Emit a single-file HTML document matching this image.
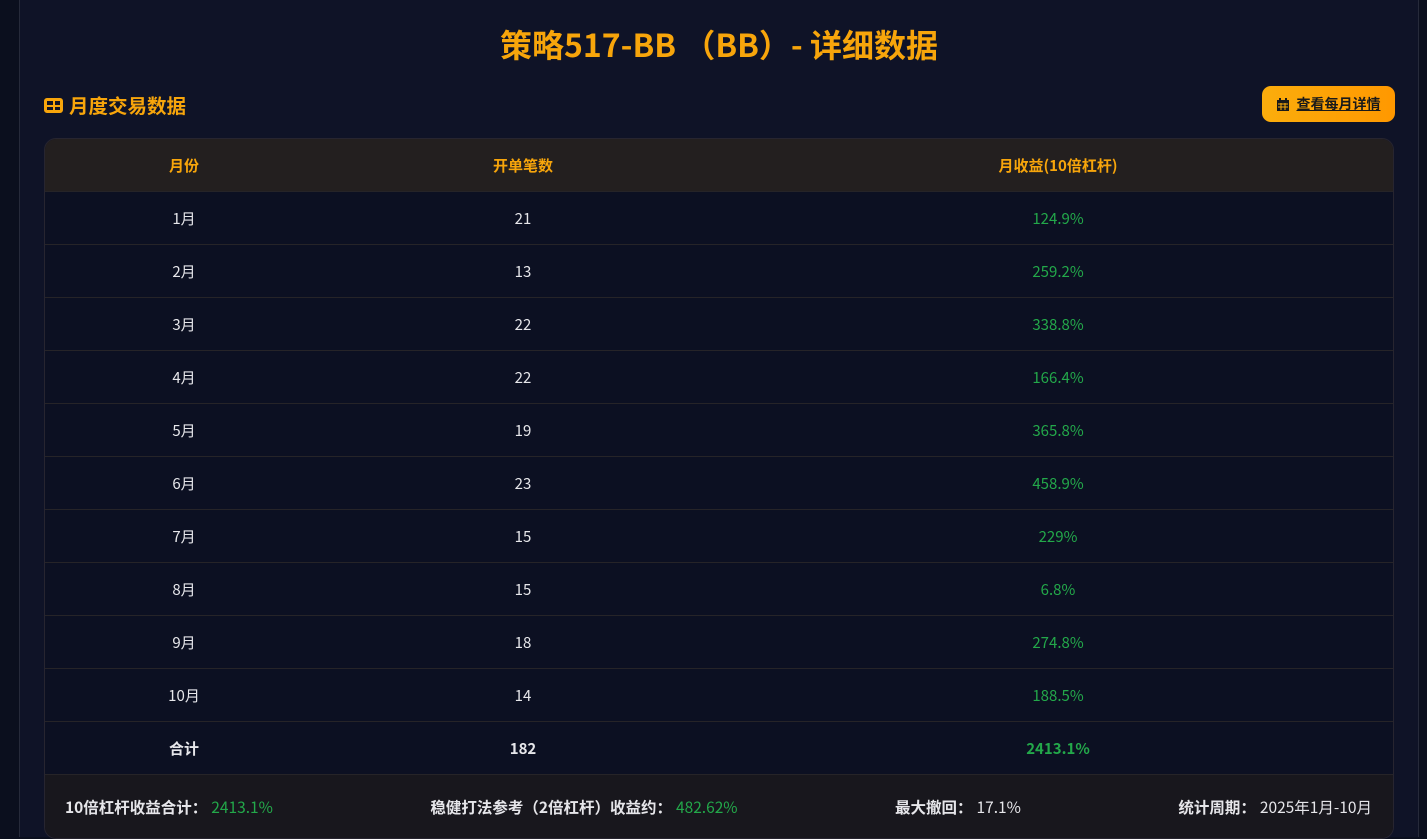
<!DOCTYPE html>
<html><head><meta charset="utf-8"><style>
*{margin:0;padding:0;box-sizing:border-box}
html,body{width:1427px;height:837px;overflow:hidden;background:#0b0f1e;font-family:"Noto Sans CJK SC","Liberation Sans",sans-serif}
.wrap{position:absolute;left:19px;top:0;width:1400px;height:837px;background:#0f1327;border-left:1px solid #262a3a;border-right:1px solid #262a3a}
h1{position:absolute;left:0;right:0;top:20px;text-align:center;color:#f7a50b;font-size:32px;font-weight:bold;line-height:48px}
.sec{position:absolute;left:24px;top:92px;color:#f7a50b;font-size:19.5px;font-weight:bold;line-height:26px;display:flex;align-items:center}
.ico{width:19px;height:15px;border:2px solid #f7a50b;border-radius:3px;background:#f7a50b;display:grid;grid-template-columns:1fr 1fr;grid-template-rows:1fr 1fr;gap:2px;padding:1px;margin-right:6px;margin-top:1px}
.ico i{background:#0f1327}
.btn{position:absolute;left:1242px;top:86px;width:133px;height:36px;border-radius:9px;background:linear-gradient(90deg,#fbad0c,#ff9800);color:#1a1a1a;font-size:14px;font-weight:bold;display:flex;align-items:center;justify-content:center}
.btn span{text-decoration:underline;margin-left:8px}
.tbl{position:absolute;left:24px;top:138px;width:1350px;border:1px solid #272530;border-radius:12px;overflow:hidden;background:#0c1022}
.row{display:flex;height:53px;border-bottom:1px solid #262428;align-items:center;font-size:15px;color:#e6e6ea}
.row div{text-align:center}
.c1{width:278px}.c2{width:400px}.c3{flex:1}
.hd{background:#231f1f;color:#f7a50b;font-weight:bold;font-size:15px}
.g{color:#23a84a}
.tot{font-weight:bold}
.ft{height:63px;background:#18171d;display:flex;justify-content:space-between;align-items:center;padding:0 21px 0 20px;font-size:15.5px;color:#e6e6ea}
.ft b{font-weight:bold;margin-right:4px}
</style></head><body>
<div class="wrap">
<h1>策略517-BB （BB）- 详细数据</h1>
<div class="sec"><div class="ico"><i></i><i></i><i></i><i></i></div>月度交易数据</div>
<div class="btn"><svg width="12" height="13" viewBox="0 0 12 13"><rect x="0" y="2" width="12" height="11" fill="#1a1a1a"/><rect x="2" y="0" width="2" height="3" fill="#1a1a1a"/><rect x="8" y="0" width="2" height="3" fill="#1a1a1a"/><path d="M1 6h10M1 9h10M4 5v7M8 5v7" stroke="#fbab0b" stroke-width="1"/></svg><span>查看每月详情</span></div>
<div class="tbl">
<div class="row hd" style="height:53px"><div class="c1">月份</div><div class="c2">开单笔数</div><div class="c3">月收益(10倍杠杆)</div></div>
<div class="row"><div class="c1">1月</div><div class="c2">21</div><div class="c3 g">124.9%</div></div>
<div class="row"><div class="c1">2月</div><div class="c2">13</div><div class="c3 g">259.2%</div></div>
<div class="row"><div class="c1">3月</div><div class="c2">22</div><div class="c3 g">338.8%</div></div>
<div class="row"><div class="c1">4月</div><div class="c2">22</div><div class="c3 g">166.4%</div></div>
<div class="row"><div class="c1">5月</div><div class="c2">19</div><div class="c3 g">365.8%</div></div>
<div class="row"><div class="c1">6月</div><div class="c2">23</div><div class="c3 g">458.9%</div></div>
<div class="row"><div class="c1">7月</div><div class="c2">15</div><div class="c3 g">229%</div></div>
<div class="row"><div class="c1">8月</div><div class="c2">15</div><div class="c3 g">6.8%</div></div>
<div class="row"><div class="c1">9月</div><div class="c2">18</div><div class="c3 g">274.8%</div></div>
<div class="row"><div class="c1">10月</div><div class="c2">14</div><div class="c3 g">188.5%</div></div>
<div class="row tot"><div class="c1">合计</div><div class="c2">182</div><div class="c3 g">2413.1%</div></div>
<div class="ft">
<div><b>10倍杠杆收益合计：</b><span class="g">2413.1%</span></div>
<div><b>稳健打法参考（2倍杠杆）收益约：</b><span class="g">482.62%</span></div>
<div><b>最大撤回：</b>17.1%</div>
<div><b>统计周期：</b>2025年1月-10月</div>
</div>
</div>
</div>
</body></html>
